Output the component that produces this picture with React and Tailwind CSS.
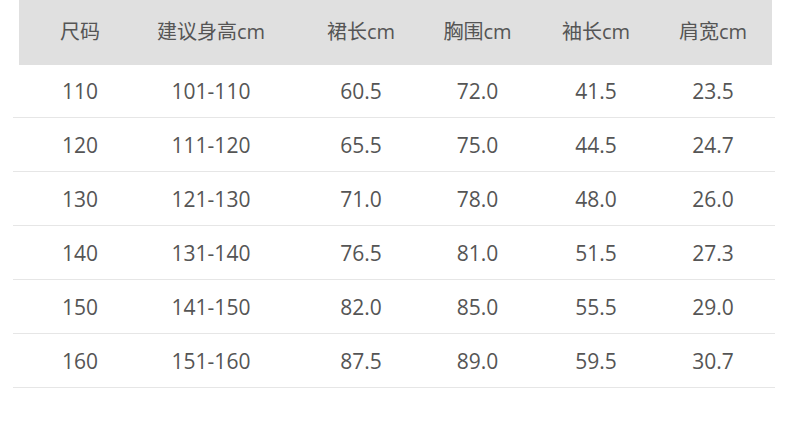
import React from 'react';

// size chart: column widths chosen so each label sits on the reference's column centre
const cols = ['w-[122px]', 'w-[140px]', 'w-[160px]', 'w-[73px]', 'w-[164px]', 'w-[70px]'];

const headers = ['尺码', '建议身高cm', '裙长cm', '胸围cm', '袖长cm', '肩宽cm'];

const rows = [
  ['110', '101-110', '60.5', '72.0', '41.5', '23.5'],
  ['120', '111-120', '65.5', '75.0', '44.5', '24.7'],
  ['130', '121-130', '71.0', '78.0', '48.0', '26.0'],
  ['140', '131-140', '76.5', '81.0', '51.5', '27.3'],
  ['150', '141-150', '82.0', '85.0', '55.5', '29.0'],
  ['160', '151-160', '87.5', '89.0', '59.5', '30.7'],
];

const font = { fontFamily: '"Open Sans", "Noto Sans CJK SC", sans-serif' };

function Cell({ i, children, className = '' }) {
  return (
    <div className={`${cols[i]} shrink-0 flex justify-center whitespace-nowrap ${className}`}>
      {children}
    </div>
  );
}

export default function App() {
  return (
    <div className="w-[790px] h-[431px] bg-white overflow-hidden" style={font}>
      <div className="pl-[13px] w-[775px]">
        {/* header */}
        <div className="ml-[6px] w-[753px] h-[65px] bg-[#e0e0e0] flex items-center text-[20px] text-[#555] pb-[1px]">
          {headers.map((h, i) => (
            <Cell key={h} i={i}>{h}</Cell>
          ))}
        </div>

        {/* rows */}
        {rows.map((r, ri) => (
          <div
            key={r[0]}
            className={`w-[762px] ${ri === 0 ? 'h-[53px]' : 'h-[54px]'} border-b border-[#e6e6e6] flex items-center pl-[6px] pt-[2px] text-[21px] text-[#555]`}
          >
            {r.map((v, i) => (
              <Cell key={i} i={i}>{v}</Cell>
            ))}
          </div>
        ))}
      </div>
    </div>
  );
}
